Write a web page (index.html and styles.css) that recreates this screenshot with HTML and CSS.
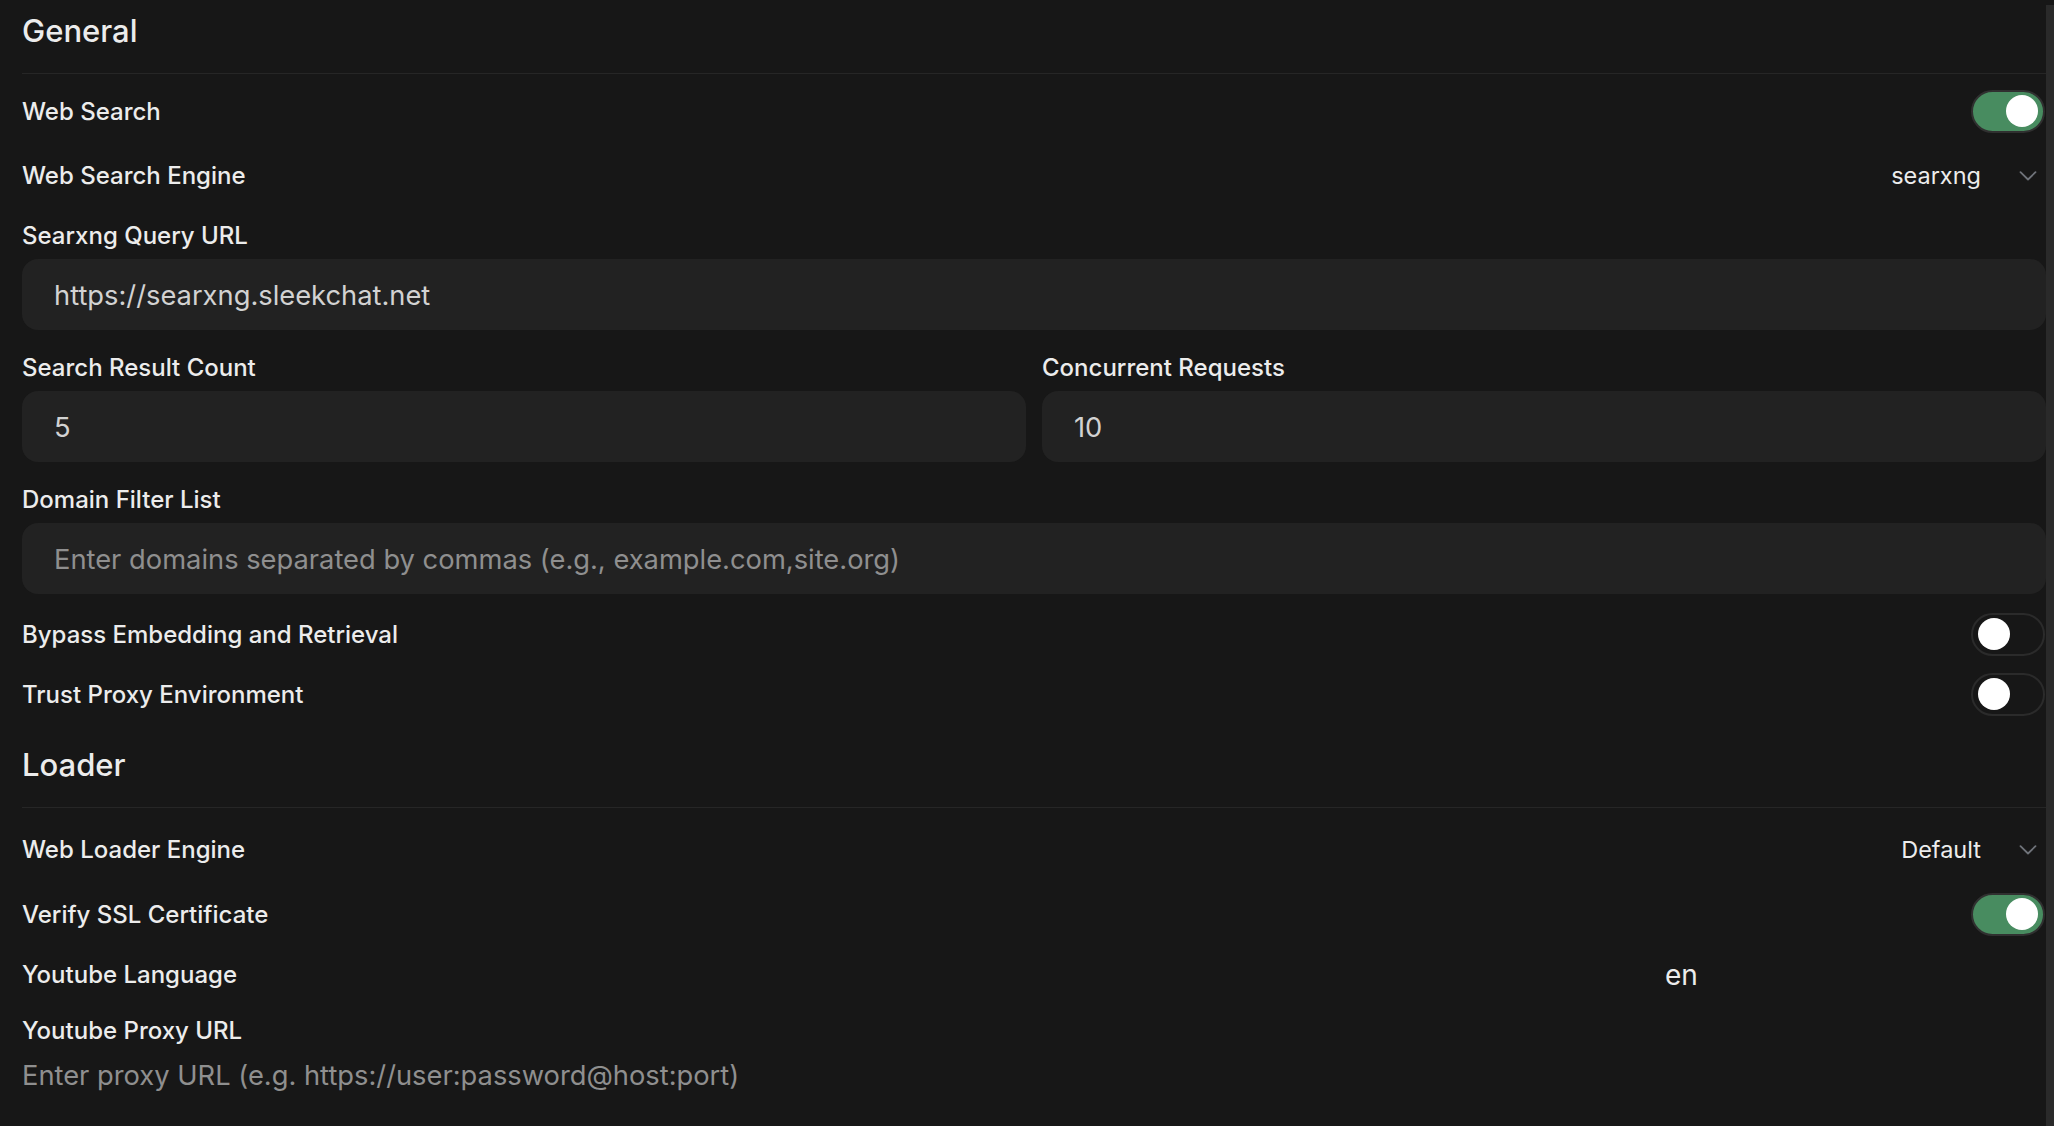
FILE: index.html
```html
<!DOCTYPE html>
<html lang="en">
<head>
    <meta charset="UTF-8">
    <meta name="viewport" content="width=device-width, initial-scale=1.0">
    <title>Web Search Settings</title>
    <link rel="stylesheet" href="styles.css">
</head>
<body>
    <div class="page">
        <div class="content">
            <!-- General -->
            <div class="section">
                <h2 class="section-title">General</h2>
                <div class="divider"></div>
                <div class="section-body">
                    <div class="row">
                        <span class="label">Web Search</span>
                        <div class="toggle on"><span class="knob"></span></div>
                    </div>
                    <div class="row select-row">
                        <span class="label">Web Search Engine</span>
                        <div class="select">
                            <span>searxng</span>
                            <svg class="chevron" width="18" height="10" viewBox="0 0 18 10" fill="none">
                                <path d="M1.5 1.2 9 8.5l7.5-7.3" stroke="#6f737a" stroke-width="1.8" stroke-linecap="round" stroke-linejoin="round"/>
                            </svg>
                        </div>
                    </div>
                    <div class="field">
                        <label class="label" for="queryUrl">Searxng Query URL</label>
                        <input class="text-input" type="text" id="queryUrl" value="https://searxng.sleekchat.net">
                    </div>
                    <div class="field two-col">
                        <div>
                            <label class="label" for="resultCount">Search Result Count</label>
                            <input class="text-input" type="text" id="resultCount" value="5">
                        </div>
                        <div>
                            <label class="label" for="concurrent">Concurrent Requests</label>
                            <input class="text-input" type="text" id="concurrent" value="10">
                        </div>
                    </div>
                    <div class="field">
                        <label class="label" for="domains">Domain Filter List</label>
                        <input class="text-input" type="text" id="domains" placeholder="Enter domains separated by commas (e.g., example.com,site.org)">
                    </div>
                    <div class="row">
                        <span class="label">Bypass Embedding and Retrieval</span>
                        <div class="toggle"><span class="knob"></span></div>
                    </div>
                    <div class="row">
                        <span class="label">Trust Proxy Environment</span>
                        <div class="toggle"><span class="knob"></span></div>
                    </div>
                </div>
            </div>

            <!-- Loader -->
            <div class="section">
                <h2 class="section-title">Loader</h2>
                <div class="divider"></div>
                <div class="section-body">
                    <div class="row select-row">
                        <span class="label">Web Loader Engine</span>
                        <div class="select">
                            <span>Default</span>
                            <svg class="chevron" width="18" height="10" viewBox="0 0 18 10" fill="none">
                                <path d="M1.5 1.2 9 8.5l7.5-7.3" stroke="#6f737a" stroke-width="1.8" stroke-linecap="round" stroke-linejoin="round"/>
                            </svg>
                        </div>
                    </div>
                    <div class="row">
                        <span class="label">Verify SSL Certificate</span>
                        <div class="toggle on"><span class="knob"></span></div>
                    </div>
                    <div class="row lang-row">
                        <span class="label">Youtube Language</span>
                        <input class="lang-input" type="text" value="en">
                    </div>
                    <div class="field">
                        <label class="label" for="proxyUrl">Youtube Proxy URL</label>
                        <input class="plain-input" type="text" id="proxyUrl" placeholder="Enter proxy URL (e.g. https://user:password@host:port)">
                    </div>
                </div>
            </div>
        </div>
        <div class="scrollbar"></div>
    </div>
</body>
</html>
```

FILE: styles.css
```css
* {
    padding: 0;
    margin: 0;
    box-sizing: border-box;
}

body {
    background-color: #171717;
    color: #ececec;
    font-family: Inter, "Noto Sans", sans-serif;
    height: 1126px;
    overflow: hidden;
}

.page {
    display: flex;
    min-height: 100vh;
}

.content {
    flex: 1;
    padding-left: 22px;
}

.scrollbar {
    width: 8px;
    margin-top: 5px;
    background-color: #2a2a2a;
}

.section + .section {
    margin-top: 18px;
}

.section-title {
    height: 60px;
    line-height: 61px;
    font-size: 31px;
    font-weight: 500;
}

.divider {
    height: 1px;
    margin-top: 13px;
    background-color: #262626;
}

.section-body {
    padding-top: 15px;
}

.label {
    display: block;
    font-size: 24px;
    font-weight: 500;
    color: #ececec;
}

/* rows with a control on the right */
.row {
    display: flex;
    justify-content: space-between;
    align-items: center;
    height: 44px;
}

.select-row {
    height: 53px;
}

.lang-row {
    height: 45px;
}

.row + .row {
    margin-top: 16px;
}

.row + .field, .field + .row {
    margin-top: 18px;
}

.field + .field {
    margin-top: 22px;
}

.field .label {
    height: 30px;
    line-height: 32px;
    margin-bottom: 9px;
}

.two-col {
    display: grid;
    grid-template-columns: 1fr 1fr;
    gap: 16px;
}

.text-input {
    width: 100%;
    height: 71px;
    padding: 2px 32px 0;
    border: none;
    outline: none;
    border-radius: 16px;
    background-color: #222222;
    color: #d2d2d2;
    font-family: inherit;
    font-size: 27.3px;
}

.text-input::placeholder, .plain-input::placeholder {
    color: #8f8f8f;
}

.plain-input {
    width: 100%;
    height: 40px;
    padding-top: 2px;
    border: none;
    outline: none;
    background: transparent;
    color: #d2d2d2;
    font-family: inherit;
    font-size: 27.3px;
}

.lang-input {
    width: 381px;
    border: none;
    outline: none;
    background: transparent;
    color: #ececec;
    font-family: inherit;
    font-size: 28px;
}

/* select */
.select {
    display: flex;
    align-items: center;
    font-size: 23.5px;
    color: #ececec;
}

.chevron {
    margin-left: 38px;
    margin-right: 9px;
}

/* toggles */
.toggle {
    display: flex;
    align-items: center;
    width: 74px;
    height: 43px;
    padding: 0 5px;
    margin-right: 1px;
    border: 2px solid #2b2b2b;
    border-radius: 999px;
}

.toggle.on {
    justify-content: flex-end;
    background-color: #488c60;
    border-color: #303030;
}

.knob {
    width: 32px;
    height: 32px;
    border-radius: 50%;
    background-color: #ffffff;
}
```
